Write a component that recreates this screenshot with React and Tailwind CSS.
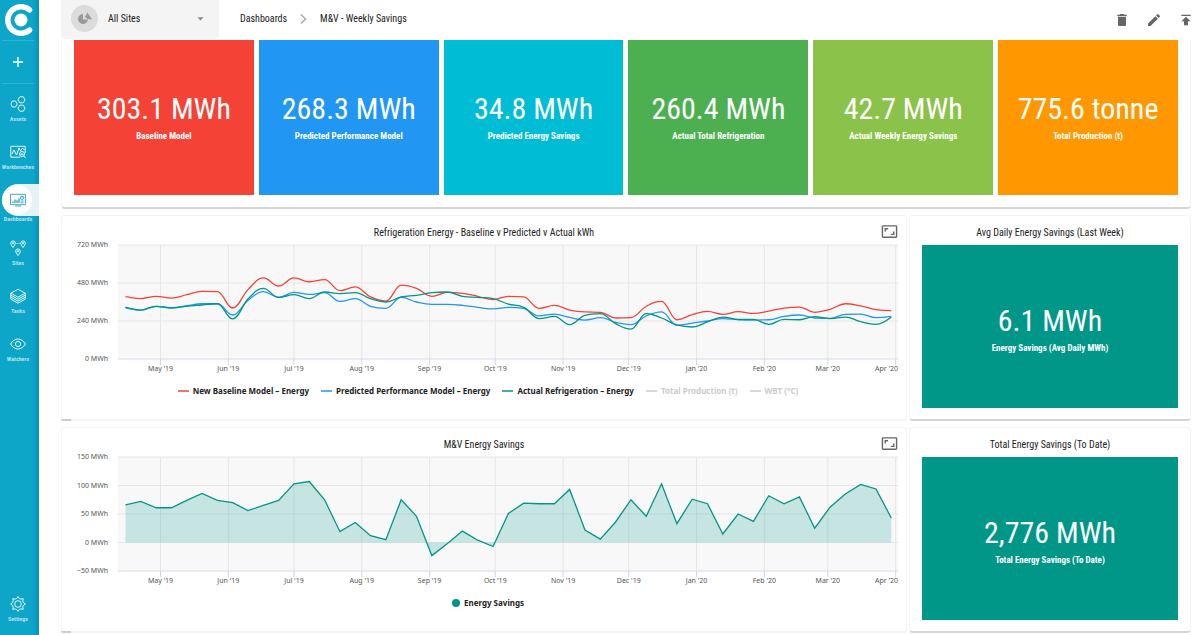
import clsx from 'clsx';
import { MdArrowDropDown, MdAspectRatio, MdDelete, MdEdit, MdPublish } from 'react-icons/md';

const TILES = [
    { value: '303.1 MWh', label: 'Baseline Model', color: 'bg-[#f44336]' },
    { value: '268.3 MWh', label: 'Predicted Performance Model', color: 'bg-[#2196f3]' },
    { value: '34.8 MWh', label: 'Predicted Energy Savings', color: 'bg-[#00bcd4]' },
    { value: '260.4 MWh', label: 'Actual Total Refrigeration', color: 'bg-[#4caf50]' },
    { value: '42.7 MWh', label: 'Actual Weekly Energy Savings', color: 'bg-[#8bc34a]' },
    { value: '775.6 tonne', label: 'Total Production (t)', color: 'bg-[#ff9800]' },
];

// weekly readings, first one on 15 Apr 2019
const BASELINE = [
    394, 381, 396, 385, 406, 427, 425, 322, 438, 512, 461, 512, 488, 501, 432, 455, 392, 366, 467, 446, 396, 421, 415, 396, 375, 396,
    392, 320, 339, 309, 297, 295, 259, 261, 333, 364, 248, 280, 301, 282, 299, 288, 303, 322, 328, 295, 314, 349, 335, 312, 305,
];
const PREDICTED = [
    324, 309, 333, 324, 337, 349, 349, 278, 370, 425, 389, 421, 408, 419, 364, 381, 333, 320, 389, 360, 345, 345, 339, 326, 316, 326,
    320, 272, 284, 263, 246, 261, 232, 217, 272, 297, 213, 227, 240, 255, 248, 246, 248, 269, 278, 259, 257, 282, 284, 261, 269,
];
const ACTUAL = [
    328, 309, 333, 322, 333, 341, 349, 253, 379, 446, 389, 406, 381, 423, 413, 419, 381, 360, 392, 402, 419, 423, 396, 389, 381, 347,
    326, 255, 269, 217, 276, 286, 223, 189, 286, 259, 215, 202, 234, 265, 250, 250, 219, 250, 248, 267, 255, 265, 236, 219, 265,
];
const SAVINGS = [
    66, 72, 61, 61, 74, 86, 74, 70, 56, 65, 74, 103, 107, 75, 19, 35, 12, 5, 75, 46, -23, -2, 20, 4, -7, 51,
    69, 68, 68, 93, 22, 6, 36, 75, 46, 103, 33, 76, 68, 15, 50, 37, 82, 68, 80, 25, 62, 85, 102, 94, 43,
];

// label and days since 1 May 2019
const MONTHS = [
    ["May '19", 0],
    ["Jun '19", 31],
    ["Jul '19", 61],
    ["Aug '19", 92],
    ["Sep '19", 123],
    ["Oct '19", 153],
    ["Nov '19", 184],
    ["Dec '19", 214],
    ["Jan '20", 245],
    ["Feb '20", 276],
    ["Mar '20", 305],
    ["Apr '20", 336],
];

const CHART = { width: 846, height: 140, left: 57, right: 837, top: 5, bottom: 119 };

const dayX = (day) => 99.5 + day * 2.188;

const toPoints = (values, min, max) =>
    values.map((v, i) => [
        dayX(i * 7 - 16),
        CHART.bottom - ((v - min) / (max - min)) * (CHART.bottom - CHART.top),
    ]);

const linePath = (pts) => 'M' + pts.map((p) => `${p[0].toFixed(2)} ${p[1].toFixed(2)}`).join('L');

const splinePath = (pts) => {
    let d = `M${pts[0][0]} ${pts[0][1]}`;
    let [outX, outY] = pts[0];
    for (let i = 1; i < pts.length; i++) {
        const [x, y] = pts[i];
        let inX = x;
        let inY = y;
        let nextX = x;
        let nextY = y;
        if (i < pts.length - 1) {
            const [px, py] = pts[i - 1];
            const [nx, ny] = pts[i + 1];
            inX = (1.5 * x + px) / 2.5;
            inY = (1.5 * y + py) / 2.5;
            nextX = (1.5 * x + nx) / 2.5;
            nextY = (1.5 * y + ny) / 2.5;
            const fix = ((nextY - inY) * (nextX - x)) / (nextX - inX) + y - nextY;
            inY += fix;
            nextY += fix;
            // keep the curve from overshooting its neighbours
            if (inY > Math.max(py, y)) {
                inY = Math.max(py, y);
                nextY = 2 * y - inY;
            } else if (inY < Math.min(py, y)) {
                inY = Math.min(py, y);
                nextY = 2 * y - inY;
            }
            if (nextY > Math.max(ny, y)) {
                nextY = Math.max(ny, y);
                inY = 2 * y - nextY;
            } else if (nextY < Math.min(ny, y)) {
                nextY = Math.min(ny, y);
                inY = 2 * y - nextY;
            }
        }
        d += `C${outX.toFixed(2)} ${outY.toFixed(2)} ${inX.toFixed(2)} ${inY.toFixed(2)} ${x.toFixed(2)} ${y.toFixed(2)}`;
        outX = nextX;
        outY = nextY;
    }
    return d;
};

const Chart = ({ title, ticks, children }) => {
    const step = (CHART.bottom - CHART.top) / (ticks.length - 1);
    return (
        <svg
            viewBox={`0 0 ${CHART.width} ${CHART.height}`}
            role="img"
            aria-label={title}
            className="block w-full font-['Noto_Sans',sans-serif] text-[7px]"
        >
            <rect x={CHART.left} y={CHART.top} width={CHART.right - CHART.left} height={CHART.bottom - CHART.top} fill="#f8f8f8" />
            {ticks.map((tick, i) => (
                <g key={tick}>
                    <line
                        x1={CHART.left}
                        x2={CHART.right}
                        y1={CHART.top + i * step}
                        y2={CHART.top + i * step}
                        stroke={i === ticks.length - 1 ? '#d5dcef' : '#e6e6e6'}
                    />
                    <text x="47" y={CHART.top + i * step + 2} textAnchor="end" fill="#555">
                        {tick}
                    </text>
                </g>
            ))}
            {MONTHS.map(([name, day], i) => (
                <g key={name}>
                    <line x1={dayX(day)} x2={dayX(day)} y1={CHART.top} y2={CHART.bottom} stroke="#e6e6e6" />
                    <line x1={dayX(day)} x2={dayX(day)} y1={CHART.bottom} y2={CHART.bottom + 6} stroke="#ccd6eb" />
                    <text
                        x={i === MONTHS.length - 1 ? CHART.right : dayX(day)}
                        y="131"
                        textAnchor={i === MONTHS.length - 1 ? 'end' : 'middle'}
                        fill="#555"
                    >
                        {name}
                    </text>
                </g>
            ))}
            {children}
        </svg>
    );
};

const ChartCard = ({ title, legend, children }) => (
    <section className="relative flex h-[206px] flex-col rounded-sm bg-white shadow-[inset_0_0_0_1px_#f4f4f4,inset_0_-2px_0_#f4f4f4]">
        <h2 className="mt-[10px] text-center text-[10px] leading-[15px] text-[#222]">{title}</h2>
        <button aria-label="Expand chart" className="absolute top-2 right-[9px] text-[#666]">
            <MdAspectRatio size={17} />
        </button>
        {children}
        <div className="flex justify-center gap-3 pt-[5px] pl-2 font-['Noto_Sans',sans-serif] text-[8px] leading-3 font-bold text-[#222]">
            {legend}
        </div>
        <span className="absolute bottom-0 left-0 h-[2px] w-[10px] rounded-bl-sm bg-[#ccc]"></span>
    </section>
);

const LegendItem = ({ name, color, off }) => (
    <button className={clsx('flex items-center gap-1', off && 'text-[#ccc]')}>
        <svg viewBox="0 0 11 2" className="h-[2px] w-[11px]">
            <path d="M0 1h11" stroke={color} strokeWidth="1.5" />
        </svg>
        {name}
    </button>
);

const Metric = ({ value, label }) => (
    <div className="flex flex-col items-center justify-center gap-1 text-center text-white">
        <div className="text-[30px] leading-[34px] whitespace-nowrap">{value}</div>
        <div className="text-[9px] leading-3 font-bold whitespace-nowrap">{label}</div>
    </div>
);

const MetricCard = ({ title, value, label }) => (
    <section className="flex h-[206px] flex-col rounded-sm border border-b-2 border-[#f4f4f4] border-b-[#d4d4d4] bg-white px-3 pb-[11px]">
        <h2 className="mt-[9px] mb-[5px] text-center text-[10px] leading-[15px] text-[#222]">{title}</h2>
        <div className="grid flex-1 bg-[#009688] pt-1">
            <Metric value={value} label={label} />
        </div>
    </section>
);

const NavIcon = ({ children }) => (
    <svg viewBox="0 0 16 16" className="relative size-4" fill="none" stroke="currentColor" strokeWidth="0.9" strokeLinejoin="round">
        {children}
    </svg>
);

const NAV = [
    {
        name: 'Assets',
        icon: (
            <>
                <path d="M2.4 5h3.2l1.6 3-1.6 3H2.4L.8 8z" />
                <path d="M9.7.8h3.6L15 3.8l-1.7 3H9.7L8 3.8z" />
                <path d="M9.7 9.2h3.6l1.7 3-1.7 3H9.7l-1.7-3z" />
            </>
        ),
    },
    {
        name: 'Workbenches',
        icon: (
            <>
                <path d="M10 13.2H.8V2.3h14.4V9" />
                <path d="M2 10l2-4 2.5 5L9 4l1.5 3 2-3 2 2" />
                <circle cx="12" cy="10" r="2.5" />
                <path d="M13.8 12l2 2.2M11 11V9.8M12 11V9M13 11V10" />
            </>
        ),
    },
    {
        name: 'Dashboards',
        active: true,
        icon: (
            <>
                <path d="M.6 2.3h14.8v10.4H.6zM5 14h6" />
                <path d="M3 11V9.5M5 11V7.5M7 11V8.2M9 11V6.5" strokeWidth="1.3" />
                <circle cx="12" cy="5.8" r="1.7" />
                <path d="M12 5.8V4M10.6 9h3M10.6 10.8h3" />
            </>
        ),
    },
    {
        name: 'Sites',
        icon: (
            <>
                <path d="M3 7.5C1.5 5.5.7 4.3.7 3.2a2.3 2.3 0 0 1 4.6 0C5.3 4.3 4.5 5.5 3 7.5z" />
                <path d="M13 7.5c-1.5-2-2.3-3.2-2.3-4.3a2.3 2.3 0 0 1 4.6 0c0 1.1-.8 2.3-2.3 4.3z" />
                <path d="M8 15.5c-1.5-2-2.3-3.2-2.3-4.3a2.3 2.3 0 0 1 4.6 0c0 1.1-.8 2.3-2.3 4.3z" />
                <circle cx="3" cy="3.2" r=".7" />
                <circle cx="13" cy="3.2" r=".7" />
                <circle cx="8" cy="11.2" r=".7" />
                <path d="M6.5 3.5h3" strokeDasharray="1 1" />
            </>
        ),
    },
    {
        name: 'Tasks',
        icon: (
            <>
                <path d="M8 1.2l7.2 4L8 9.2l-7.2-4z" />
                <path d="M.8 7.2l7.2 4 7.2-4M.8 9.2l7.2 4 7.2-4M.8 11.2l7.2 4 7.2-4M.8 5.2v6M15.2 5.2v6" />
            </>
        ),
    },
    {
        name: 'Watchers',
        icon: (
            <>
                <path d="M.6 8C2.5 4.8 5 3 8 3s5.5 1.8 7.4 5C13.5 11.2 11 13 8 13S2.5 11.2.6 8z" />
                <circle cx="8" cy="8" r="2.6" />
            </>
        ),
    },
];

const NavItem = ({ name, icon, active }) => (
    <a href="#" className="flex h-12 flex-col">
        <span
            className={clsx(
                'relative flex items-center',
                active ? 'mt-1 ml-[2px] h-8 rounded-l-full bg-[#e3f4f8] pl-2 text-[#2a9fc0]' : 'mt-2 h-6 pl-[10px] text-white'
            )}
        >
            {active && <span className="absolute left-0 size-[30px] rounded-full bg-white"></span>}
            <NavIcon>{icon}</NavIcon>
        </span>
        <span className="flex w-9 justify-center text-[6px] leading-[6px] font-bold text-[#b5e2ee]">{name}</span>
    </a>
);

const Sidebar = () => (
    <nav className="sticky top-0 flex h-screen w-[39px] shrink-0 flex-col bg-linear-to-r from-[#0da5c8] from-85% to-[#0994b8]">
        <svg viewBox="0 0 32 36" className="mt-[2px] ml-1 h-9 w-8 shrink-0">
            <path d="M25.5 7.9A13.2 13.2 0 1 0 25.5 28.1" fill="none" stroke="#fff" strokeWidth="5.5" strokeLinecap="round" />
            <circle cx="17" cy="18" r="6.5" fill="#fff" />
        </svg>
        <div className="mt-[2px] mr-[5px] ml-[2px] flex h-[44px] items-center justify-center border-y border-[#33b3d1]">
            <button aria-label="Add" className="text-white">
                <svg viewBox="0 0 10 10" className="size-[10px]" stroke="currentColor" strokeWidth="1.4">
                    <path d="M5 0v10M0 5h10" />
                </svg>
            </button>
        </div>
        {NAV.map((item) => (
            <NavItem key={item.name} {...item} />
        ))}
        <div className="mt-auto mb-[3px]">
            <NavItem
                name="Settings"
                icon={
                    <>
                        <circle cx="8" cy="8" r="3.3" />
                        <path d="M8 .6l1.3 1.9 1.6.6 2.3-.4-.4 2.3.6 1.6L15.4 8l-2 1.4-.6 1.6.4 2.3-2.3-.4-1.6.6L8 15.4l-1.3-1.9-1.6-.6-2.3.4.4-2.3-.6-1.6L.6 8l2-1.4.6-1.6-.4-2.3 2.3.4 1.6-.6z" />
                    </>
                }
            />
        </div>
    </nav>
);

const Header = () => (
    <header className="sticky top-0 z-10 flex h-10 items-start bg-white text-[10px] text-[#222]">
        <div className="relative flex h-[39px] w-[158px] items-center rounded-b bg-[#f4f4f4] pb-[2px] pl-[10px]">
            <svg viewBox="0 0 27 27" className="size-[27px] shrink-0">
                <circle cx="13.5" cy="13.5" r="13.5" fill="#dcdcdc" />
                <path d="M12 9a5 5 0 1 0 5 5.500h-5z" fill="#999" />
                <path d="M16.5 7.5l4.5 7-4.5-.5-2.500-2z" fill="#999" />
            </svg>
            <select aria-label="Site" className="h-7 flex-1 appearance-none bg-transparent pl-[10px] outline-none">
                <option>All Sites</option>
            </select>
            <MdArrowDropDown size={15} className="pointer-events-none absolute right-[11px] text-[#888]" />
        </div>
        <nav className="ml-[21px] flex h-[37px] items-center gap-[13px]">
            <a href="#">Dashboards</a>
            <svg viewBox="0 0 7 10" className="h-[10px] w-[7px]" fill="none" stroke="#aaa" strokeWidth="1.5">
                <path d="M1 .5L5.5 5 1 9.5" />
            </svg>
            <span>M&V - Weekly Savings</span>
        </nav>
        <div className="ml-auto flex h-10 items-center gap-4 text-[#666]">
            <button aria-label="Delete">
                <MdDelete size={16} />
            </button>
            <button aria-label="Edit">
                <MdEdit size={16} />
            </button>
            <button aria-label="Publish" className="-mr-[3px]">
                <MdPublish size={16} />
            </button>
        </div>
    </header>
);

const App = () => {
    const savings = toPoints(SAVINGS, -50, 150);
    const zeroY = CHART.bottom - 0.25 * (CHART.bottom - CHART.top);
    const area = `${linePath(savings)}L${savings[50][0]} ${zeroY}L${savings[0][0]} ${zeroY}Z`;

    return (
        <div className="flex min-h-screen bg-white font-['Liberation_Sans_Narrow','Roboto_Condensed',Roboto,sans-serif]">
            <Sidebar />
            <main className="min-w-0 flex-1 pr-[9px] pl-[22px]">
                <Header />
                <div className="flex flex-col gap-[6px]">
                    <section className="grid grid-cols-6 gap-[5px] rounded-b-sm border-x border-b-2 border-x-[#f4f4f4] border-b-[#d4d4d4] px-3 pb-3">
                        {TILES.map((tile) => (
                            <div key={tile.label} className={clsx('grid h-[155px] pb-[2px]', tile.color)}>
                                <Metric value={tile.value} label={tile.label} />
                            </div>
                        ))}
                    </section>

                    <div className="grid grid-cols-[3fr_1fr] gap-[2px]">
                        <ChartCard
                            title="Refrigeration Energy - Baseline v Predicted v Actual kWh"
                            legend={
                                <>
                                    <LegendItem name="New Baseline Model – Energy" color="#f44336" />
                                    <LegendItem name="Predicted Performance Model – Energy" color="#2196f3" />
                                    <LegendItem name="Actual Refrigeration – Energy" color="#009688" />
                                    <LegendItem name="Total Production (t)" color="#ccc" off />
                                    <LegendItem name="WBT (°C)" color="#ccc" off />
                                </>
                            }
                        >
                            <Chart title="Refrigeration energy" ticks={['720 MWh', '480 MWh', '240 MWh', '0 MWh']}>
                                <g fill="none" strokeWidth="1.3">
                                    <path d={splinePath(toPoints(BASELINE, 0, 720))} stroke="#f44336" />
                                    <path d={splinePath(toPoints(PREDICTED, 0, 720))} stroke="#2196f3" />
                                    <path d={splinePath(toPoints(ACTUAL, 0, 720))} stroke="#009688" />
                                </g>
                            </Chart>
                        </ChartCard>
                        <MetricCard title="Avg Daily Energy Savings (Last Week)" value="6.1 MWh" label="Energy Savings (Avg Daily MWh)" />
                    </div>

                    <div className="grid grid-cols-[3fr_1fr] gap-[2px]">
                        <ChartCard
                            title="M&V Energy Savings"
                            legend={
                                <button className="flex items-center gap-1">
                                    <span className="size-2 rounded-full bg-[#009688]"></span>
                                    Energy Savings
                                </button>
                            }
                        >
                            <Chart title="Energy savings" ticks={['150 MWh', '100 MWh', '50 MWh', '0 MWh', '−50 MWh']}>
                                <path d={area} fill="#009688" fillOpacity="0.2" />
                                <path d={linePath(savings)} fill="none" stroke="#009688" strokeWidth="1.3" />
                            </Chart>
                        </ChartCard>
                        <MetricCard title="Total Energy Savings (To Date)" value="2,776 MWh" label="Total Energy Savings (To Date)" />
                    </div>
                </div>
            </main>
        </div>
    );
};

export default App;
